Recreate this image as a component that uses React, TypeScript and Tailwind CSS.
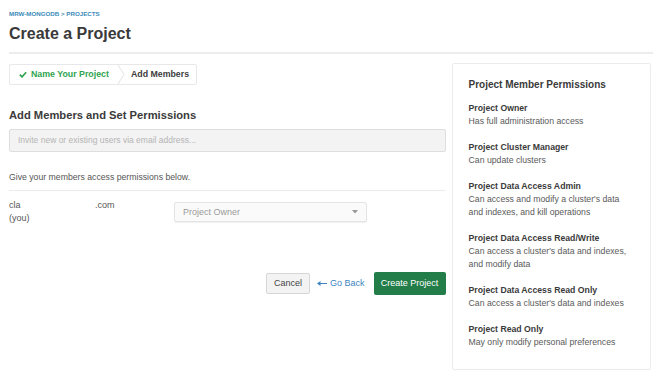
const permissions = [
  { name: "Project Owner", desc: "Has full administration access" },
  { name: "Project Cluster Manager", desc: "Can update clusters" },
  {
    name: "Project Data Access Admin",
    desc: "Can access and modify a cluster's data and indexes, and kill operations",
  },
  {
    name: "Project Data Access Read/Write",
    desc: "Can access a cluster's data and indexes, and modify data",
  },
  {
    name: "Project Data Access Read Only",
    desc: "Can access a cluster's data and indexes",
  },
  { name: "Project Read Only", desc: "May only modify personal preferences" },
];

function Steps() {
  return (
    <div className="flex h-[21px] w-[188px] items-stretch whitespace-nowrap rounded-[2px] border border-[#e8e8e8] bg-white text-[8.8px] font-bold">
      <div className="flex items-center gap-[4px] pl-[9px] pr-[9px] text-[#2ea44f]">
        <svg width="8" height="7" viewBox="0 0 10 8">
          <path d="M1 4.2 3.8 7 9 1.2" fill="none" stroke="#2ea44f" strokeWidth="2" />
        </svg>
        Name Your Project
      </div>
      <svg width="7" height="19" viewBox="0 0 7 19" className="shrink-0">
        <path d="M0 0 6 9.5 0 19" fill="none" stroke="#e2e2e2" strokeWidth="1" />
      </svg>
      <div className="flex items-center pl-[6px] text-[#3d3d3d]">Add Members</div>
    </div>
  );
}

export default function App() {
  return (
    <div className="h-[380px] w-[660px] overflow-hidden bg-white px-[9px] font-['Liberation_Sans',Arial,sans-serif] text-[#3d3d3d]">
      <div className="pt-[9px] text-[6.2px] font-bold uppercase leading-[9px] text-[#3c8ab8]">
        MRW-MONGODB &gt; PROJECTS
      </div>
      <h1 className="mt-[6px] text-[16px] font-bold leading-[20px] text-[#3a3a3a]">
        Create a Project
      </h1>
      <div className="mt-[8px] h-[2px] w-[644px] bg-[#ececec]" />

      <div className="mt-[9px] flex gap-[6px]">
        <div className="w-[438px]">
          <div className="pt-[1px]">
            <Steps />
          </div>
          <h2 className="mt-[22px] text-[11.2px] font-bold leading-[16px] text-[#3a3a3a]">
            Add Members and Set Permissions
          </h2>
          <div className="mt-[6px] flex h-[23px] items-center rounded-[2px] border border-[#dedede] bg-[#f3f3f3] px-[8px] text-[8.5px] text-[#b5b5b5]">
            Invite new or existing users via email address...
          </div>
          <p className="mt-[19px] text-[8.7px] leading-[12px] text-[#555]">
            Give your members access permissions below.
          </p>
          <div className="mt-[7px] h-px bg-[#ececec]" />
          <div className="mt-[8px] flex text-[9px] leading-[13px] text-[#555]">
            <div className="w-[86px]">
              cla
              <br />
              (you)
            </div>
            <div className="w-[79px]">.com</div>
            <div className="mt-[3px] flex h-[20px] w-[193px] items-center justify-between rounded-[2px] border border-[#e4e4e4] bg-[#fafafa] px-[8px] text-[#9a9a9a] shadow-[0_1px_1px_rgba(0,0,0,0.06)]">
              Project Owner
              <svg width="6" height="4" viewBox="0 0 6 4">
                <path d="M0 0h6L3 3.5z" fill="#999" />
              </svg>
            </div>
          </div>
          <div className="mt-[47px] flex items-center justify-end text-[9px]">
            <button className="h-[21px] w-[44px] rounded-[2px] border border-[#d6d6d6] bg-[#f3f3f3] text-[#444]">
              Cancel
            </button>
            <button className="ml-[7px] flex items-center gap-[3px] text-[#3c84c0]">
              <svg width="10" height="5" viewBox="0 0 10 5">
                <path d="M0 2.5 3.5 0v5z M3 2h7v1H3z" fill="#3c84c0" />
              </svg>
              Go Back
            </button>
            <button className="ml-[9px] h-[23px] w-[72px] rounded-[2px] bg-[#227d49] text-white">
              Create Project
            </button>
          </div>
        </div>

        <div className="h-[307px] w-[200px] rounded-[2px] border border-[#ececec] px-[16px] pt-[14px]">
          <div className="text-[10px] font-bold leading-[14px] text-[#3a3a3a]">
            Project Member Permissions
          </div>
          <div className="mt-[10px] flex flex-col gap-[13px]">
            {permissions.map((p) => (
              <div key={p.name} className="text-[8.7px] leading-[13px]">
                <div className="font-bold text-[#3a3a3a]">{p.name}</div>
                <div className="text-[#5a5a5a]">{p.desc}</div>
              </div>
            ))}
          </div>
        </div>
      </div>
    </div>
  );
}
